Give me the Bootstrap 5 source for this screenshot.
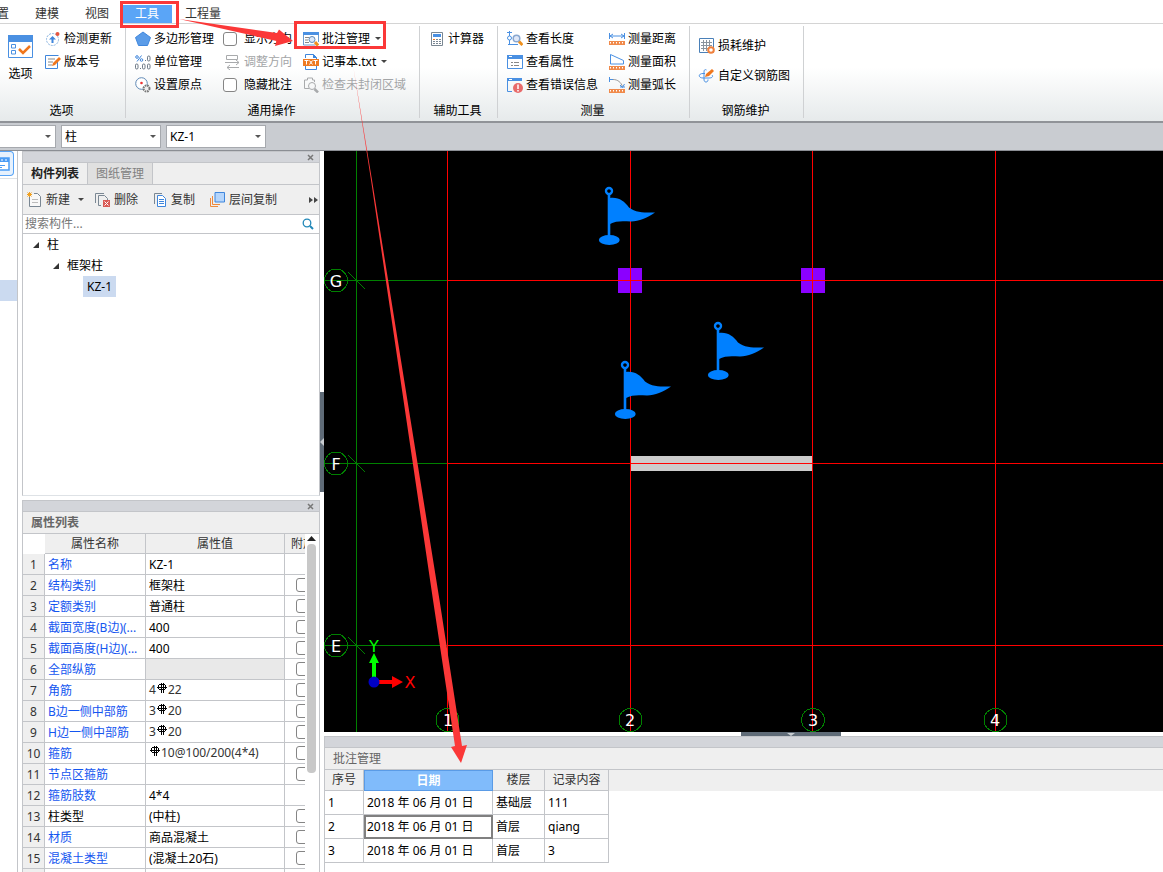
<!DOCTYPE html>
<html lang="zh-CN">
<head>
<meta charset="utf-8">
<meta name="viewport" content="width=device-width, initial-scale=1">
<title>工具 - 批注管理</title>
<link href="https://cdn.jsdelivr.net/npm/bootstrap@5.3.0/dist/css/bootstrap.min.css" rel="stylesheet">
<style>
  :root { --line: #c3c5c9; --bar: #d3d5da; --pane: #efefef; --blue: #4a90e2; }
  body { font: 12px/18px "Noto Sans", "Noto Sans CJK SC", sans-serif; color: #000; background: #fff; overflow: hidden; }
  button { font: inherit; color: inherit; background: none; border: 0; padding: 0; }
  svg { flex: none; display: block; }
  .app { height: 100vh; position: relative; }
  .marks { position: absolute; inset: 0; width: 100%; height: 100%; pointer-events: none; z-index: 5; }

  /* menu tabs */
  .menu-tabs { height: 24px; padding-top: 5px; border-bottom: 1px solid #d4d4d4; }
  .menu-tabs a { color: #333; text-decoration: none; width: 50px; text-align: center; height: 18px; }
  .menu-tabs a.edge { width: 9px; display: flex; justify-content: flex-end; overflow: hidden; margin-right: 13px; }
  .menu-tabs a.on { background: #5aa5f7; color: #fff; }
  .menu-tabs a:last-child { margin-left: 6px; }

  /* ribbon */
  .ribbon { height: 99px; background: linear-gradient(#fff 45%, #e6eaeb); border-bottom: 2px solid #909398; }
  .rb-group { position: relative; display: flex; flex-direction: column; justify-content: space-between; border-right: 1px solid #cfd1d3; margin: 2px 0 3px; padding-top: 1px; }
  .rb-group .title { text-align: center; height: 16px; line-height: 18px; padding-right: 2px; }
  .tool { display: flex; align-items: center; gap: 3px; height: 23px; white-space: nowrap; }
  .tool:disabled { color: #a3a5a7; }
  .tick { gap: 7px; }
  .tick input, .props input { appearance: none; width: 14px; height: 14px; margin: 0; border: 1px solid #858585; border-radius: 3px; background: #fff; flex: none; }
  .caret { border: 3px solid transparent; border-top-color: #444; border-bottom: 0; margin-left: 2px; }
  .upkeep { padding: 7px 0 0 8px; }
  .upkeep .tool + .tool { margin-top: 7px; }

  /* selector bar */
  .picker-bar { height: 28px; background: #c9ccd1; border-bottom: 1px solid #8b8e94; gap: 5px; }
  .picker-bar select { appearance: none; width: 100px; height: 23px; border: 1px solid #a6a9ae; border-radius: 0; padding: 0 3px; line-height: 18px; color: #000; background: #fff; }
  .picker { position: relative; }
  .picker::after { content: ""; position: absolute; right: 5px; top: 10px; border: 3px solid transparent; border-top-color: #555; border-bottom: 0; pointer-events: none; }
  .picker-bar .cut select { width: 56px; border-left: 0; }

  /* left side */
  .rail { width: 18px; border-right: 1px solid var(--line); }
  .rail button { width: 14px; height: 25px; border: 1px solid #57a3f5; border-left: 0; border-radius: 0 4px 4px 0; background: #e6f1fd; }
  .rail .row-on { height: 21px; background: #cbdaf0; }
  .side { width: 298px; margin-left: 4px; gap: 4px; }
  .panel { border: 1px solid var(--line); border-bottom: 0; min-height: 0; }
  .grip { height: 11px; background: var(--bar); border-bottom: 1px solid var(--line); display: flex; justify-content: flex-end; align-items: center; padding-right: 5px; }
  .side-tabs { background: var(--pane); height: 22px; border-bottom: 1px solid var(--line); }
  .side-tabs button { width: 65px; border-right: 1px solid var(--line); color: #808080; background: #e0e0e0; }
  .side-tabs button.on { background: var(--pane); color: #222; font-weight: 600; }
  .side-tools { background: var(--pane); height: 30px; border-bottom: 1px solid var(--line); padding: 0 1px 0 4px; color: #333; }
  .side-tools .tool { gap: 4px; }
  .find { height: 19px; border-bottom: 1px solid var(--line); padding: 0 5px 0 2px; }
  .find input { border: 0; outline: 0; flex: 1; padding: 0; height: 18px; min-width: 0; }
  .find input::placeholder { color: #777; opacity: 1; }
  .tree { list-style: none; margin: 0; padding: 0; }
  .tree li > div { height: 21px; display: flex; align-items: center; gap: 8px; }
  .tree .leaf { background: #cbdaf0; padding: 0 4px; line-height: 21px; }
  .ptitle { height: 22px; line-height: 21px; padding-left: 8px; background: var(--pane); border-bottom: 1px solid var(--line); color: #666; }

  .sheet { border-collapse: separate; border-spacing: 0; table-layout: fixed; }
  .sheet th, .sheet td { padding: 0 3px; font-weight: 400; white-space: nowrap; overflow: hidden; border-right: 1px solid var(--line); border-bottom: 1px solid var(--line); }
  .sheet thead th { background: var(--pane); color: #333; text-align: center; }
  .props { width: 298px; }
  .props tr { height: 21px; }
  .props thead tr { height: 20px; }
  .props th, .props td { line-height: 19px; }
  .props tbody th { background: var(--pane); color: #333; text-align: center; padding: 0; }
  .props td:nth-child(2) { color: #1456f0; text-overflow: ellipsis; }
  .props td.plain:nth-child(2) { color: #000; }
  .props td:nth-child(4), .props thead th:nth-child(4) { text-align: left; border-right: 0; }
  .props td:nth-child(4) { padding-left: 11px; }
  .props thead th:nth-child(4) { padding-left: 6px; }
  .props input { display: block; }
  .props .bar { color: #333; line-height: 17px; padding-bottom: 2px; }
  .props .bar svg { display: inline-block; vertical-align: 1px; margin: 0 1px; }
  .clip { flex: 1; overflow: hidden; min-width: 0; }
  .vscroll { width: 14px; padding: 2px 3px 0 2px; }
  .vscroll i { display: block; width: 9px; height: 229px; border-radius: 4px; background: #c8c8c8; margin-top: 3px; }

  /* drawing side */
  .split { width: 4px; background: #fff; }
  .split i, .hsplit i { background: #5f6b77; display: flex; align-items: center; justify-content: center; }
  .split i { height: 100px; margin-top: 241px; }
  .hsplit { height: 4px; padding-left: 94px; }
  .hsplit i { width: 100px; height: 4px; }
  .view { flex: 1 1 0; background: #000; min-height: 0; }
  .view text { font-family: "DejaVu Sans", sans-serif; font-size: 16px; fill: #fff; text-anchor: middle; }
  .notes { height: 136px; border: solid var(--line); border-width: 1px 0 0 1px; }
  .notes .heads { background: linear-gradient(var(--pane) 21px, #fff 21px); }
  .log { width: 284px; }
  .log tr { height: 24px; }
  .log thead tr { height: 21px; }
  .log thead th:nth-child(2) { background: #80bbfb; border: 1px solid #5a9be6; color: #fff; font-weight: 600; }
  .log td.cur { border: 0; box-shadow: inset 0 0 0 2px #808080; }
</style>
</head>
<body>
<svg width="0" height="0" class="position-absolute" aria-hidden="true">
  <defs>
    <g id="flag" fill="#0080ff">
      <circle r="3" fill="#000" stroke="#0080ff" stroke-width="2.4"/>
      <path d="M-1.300 3.500h2.600v43h-2.600z"/>
      <path d="M1 7C10 6 15 10 20 16.500C27 22 36 21.500 46 21.500C38 27 30 30.500 22 30.500C14 30 7 29.500 1 33z"/>
      <ellipse cx="0.300" cy="49" rx="10.400" ry="5"/>
    </g>
    <symbol id="rebar" viewBox="0 0 10 10"><path d="M2 1.500h6M1.500 2v4M8.500 2v4M2 6.500h6M0 4.500h10M4 0v10M6 0v10" fill="none" stroke="#000" shape-rendering="crispEdges"/></symbol>
    <symbol id="ruler" viewBox="0 0 16 4"><path d="M0 0h16v4H0z" fill="#f08a4b"/><path d="M1.500 1v1.500M4.500 1v1.500M7.500 1v1.500M10.500 1v1.500M13.500 1v1.500" stroke="#fff"/></symbol>
    <symbol id="x" viewBox="0 0 7 7"><path d="M1 1l5 5M6 1l-5 5" stroke="#777" stroke-width="1.500"/></symbol>
  </defs>
</svg>

<div class="app d-flex flex-column">
  <nav class="menu-tabs d-flex flex-shrink-0">
    <a class="edge" href="#">置</a><a href="#">建模</a><a href="#">视图</a><a class="on" href="#">工具</a><a href="#">工程量</a>
  </nav>

  <div class="ribbon d-flex flex-shrink-0">
    <section class="rb-group" style="width:126px">
      <div class="d-flex">
        <button class="d-flex flex-column align-items-center ms-2 pt-2">
          <svg width="25" height="23"><path d="M.5.500h24v22H.5z" fill="#fff" stroke="#4a90e2"/><path d="M0 0h25v7H0z" fill="#4a90e2"/><path d="M3.500 9.500h4v3.500h-4zM3.500 15.500h4V19h-4z" fill="none" stroke="#4a90e2"/><path d="M11 14l4 4 7-7" fill="none" stroke="#f0761c" stroke-width="2.500"/></svg>
          <span style="padding-top:7px">选项</span>
        </button>
        <div style="margin-left:12px">
          <button class="tool"><svg width="16" height="16"><circle cx="7.500" cy="8.500" r="6" fill="#fff" stroke="#8ab4e0" stroke-dasharray="2 1"/><path d="M7.500 5l3.500 3.500h-2.500V12h-2V8.500H4z" fill="#3f86dc"/><circle cx="12.500" cy="3" r="2" fill="#e5553f"/></svg>检测更新</button>
          <button class="tool"><svg width="16" height="16"><path d="M12.500 8v6.500h-12v-13h13" fill="none" stroke="#3f86dc"/><path d="M3 5h7M3 8h5M3 11h4" stroke="#888"/><path d="M7 12l1-3 6-6 2 2-6 6z" fill="#f0761c"/></svg>版本号</button>
        </div>
      </div>
      <div class="title">选项</div>
    </section>

    <section class="rb-group" style="width:294px">
      <div class="d-flex">
        <div style="width:88px;margin-left:9px">
          <button class="tool"><svg width="16" height="16"><path d="M8 1l7.500 5.500-3 8h-9l-3-8z" fill="#5b9ce8" stroke="#3f86dc"/></svg>多边形管理</button>
          <button class="tool"><svg width="16" height="16" fill="none" stroke="#6a7784"><circle cx="2" cy="3" r="1.300" stroke="#3f86dc"/><circle cx="6.500" cy="6" r="1.300" stroke="#3f86dc"/><path d="M6.500 1.500l-4.500 6" stroke="#3f86dc"/><path d="M10 6.500h1"/><rect x="12.500" y="2" width="2.500" height="5" rx="1.200"/><rect x=".5" y="10" width="2.500" height="5" rx="1.200"/><path d="M5 14.500h1"/><rect x="7.500" y="10" width="2.500" height="5" rx="1.200"/><rect x="12.500" y="10" width="2.500" height="5" rx="1.200"/></svg>单位管理</button>
          <button class="tool"><svg width="16" height="16"><circle cx="6.500" cy="6.500" r="5.800" fill="#fff" stroke="#5f88b5"/><circle cx="6.500" cy="6" r="1.300" fill="#e33"/><circle cx="11.500" cy="11.500" r="3" fill="#eee" stroke="#777" stroke-width="2" stroke-dasharray="1.600 .8"/></svg>设置原点</button>
        </div>
        <div style="width:80px">
          <label class="tool tick"><input type="checkbox">显示方向</label>
          <button class="tool" disabled><svg width="18" height="16" fill="none" stroke="#a8aaac"><path d="M3.500 1.500h11v4h-11zM2 8.500h14M13 6l3 2.500-3 2.500M16 13.500H4M7 11l-3 2.500L7 16"/></svg>调整方向</button>
          <label class="tool tick"><input type="checkbox">隐藏批注</label>
        </div>
        <div>
          <button class="tool"><svg width="16" height="16"><path d="M.5 1v13h12M15.500 2v9" fill="none" stroke="#6b9bd0"/><path d="M0 1h16v3H0z" fill="#4a90e2"/><path d="M2 6.500h4M2 9h3M2 11.500h4" stroke="#888"/><circle cx="9" cy="8.500" r="3" fill="#dce9fa" stroke="#5f88b5"/><path d="M12 11l3 3.500" stroke="#f0901c" stroke-width="3"/></svg>批注管理<i class="caret"></i></button>
          <button class="tool"><svg width="16" height="16"><path d="M2.500 4V.5h8l3 3V15.500h-11V12" fill="#fff" stroke="#3f86dc"/><path d="M10 0v4h4" fill="#3f86dc"/><path d="M0 5h16v7H0z" fill="#ee7a22"/><path d="M1.500 6.500h4M3.500 6.500v4M6.500 6.500l3 4M9.500 6.500l-3 4M10.500 6.500h4M12.500 6.500v4" stroke="#fff"/></svg>记事本.txt<i class="caret"></i></button>
          <button class="tool" disabled><svg width="16" height="16" fill="none" stroke="#a8aaac"><path d="M6 11.500H1.500V3h3V1h5v2h2v2"/><circle cx="9" cy="9" r="3.500"/><path d="M11.500 12l3.500 3.500" stroke-width="2.500"/></svg>检查未封闭区域</button>
        </div>
      </div>
      <div class="title">通用操作</div>
    </section>

    <section class="rb-group" style="width:78px">
      <div style="padding-left:10px"><button class="tool"><svg width="15" height="16"><path d="M1.500 1.500h11v13h-11z" fill="#fff" stroke="#7a8793"/><path d="M3 3h8v3H3z" fill="#4a90e2"/><path d="M3 8.500h8M3 10.500h8M3 12.500h8" stroke="#7a8793" stroke-dasharray="2 1"/><path d="M3 8.500h2" stroke="#f0761c"/></svg>计算器</button></div>
      <div class="title">辅助工具</div>
    </section>

    <section class="rb-group" style="width:192px">
      <div class="d-flex">
        <div style="width:102px;margin-left:9px">
          <button class="tool"><svg width="16" height="16" fill="none" stroke="#4a90e2"><path d="M2.500 0v5M2.500 9v4M0 1.500h5M1 13.500h10"/><circle cx="2.500" cy="7" r="2"/><circle cx="9.500" cy="7.500" r="3.300" fill="#dfe7f7" stroke="#8aa8d0" stroke-width="1.500"/><path d="M12 10.500l3.500 3.500" stroke="#f0901c" stroke-width="3"/></svg>查看长度</button>
          <button class="tool"><svg width="16" height="16"><path d="M.5 1.500h15v13H.5z" fill="#fff" stroke="#4a90e2"/><path d="M0 1h16v4H0z" fill="#4a90e2"/><path d="M4 8.500h2M7 8.500h5M4 11.500h2M7 11.500h5" stroke="#888"/><path d="M2 2.500h3" stroke="#fff"/></svg>查看属性</button>
          <button class="tool"><svg width="16" height="16"><path d="M.5 1v13.500H5" fill="none" stroke="#4a90e2"/><path d="M0 1h15v3H0z" fill="#4a90e2"/><path d="M2 2.500h3" stroke="#fff"/><circle cx="11" cy="11" r="5" fill="#e86a6a"/><path d="M11 7.500v4.500M11 13v1.500" stroke="#fff" stroke-width="1.500"/></svg>查看错误信息</button>
        </div>
        <div>
          <button class="tool"><svg width="16" height="16"><path d="M.5 2v6M15.500 2v6M1 5h14M4 3l-3 2 3 2M12 3l3 2-3 2" fill="none" stroke="#4a90e2"/><use href="#ruler" y="10" width="16" height="4"/></svg>测量距离</button>
          <button class="tool"><svg width="16" height="16"><path d="M1.500.5v9.500h13V6.500z" fill="none" stroke="#4a90e2"/><use href="#ruler" y="12" width="16" height="4"/></svg>测量面积</button>
          <button class="tool"><svg width="16" height="16"><path d="M.5 0v5M0 2.500h4M11 10h5" fill="none" stroke="#4a90e2"/><path d="M4 2.500c5 0 8 3 9.500 7" fill="none" stroke="#999"/><path d="M11 8l2.500 2.500L15.500 7" fill="none" stroke="#4a90e2"/><use href="#ruler" y="12" width="16" height="4"/></svg>测量弧长</button>
        </div>
      </div>
      <div class="title">测量</div>
    </section>

    <section class="rb-group" style="width:114px">
      <div class="upkeep">
        <button class="tool"><svg width="17" height="16"><path d="M1.500.500h14v14h-14z" fill="#fff" stroke="#4a80b8"/><path d="M3 4.500h11M3 7.500h11M3 10.500h8M5.500 2v11M8.500 2v11M11.500 2v8" stroke="#8a949e"/><circle cx="13" cy="12" r="2.800" fill="#fff" stroke="#f0803c" stroke-width="2"/></svg>损耗维护</button>
        <button class="tool"><svg width="17" height="16" fill="none" stroke="#4a90e2"><path d="M8.500 2c-2-1-2.500 0-2.500 3v6c0 2 .5 3 2 3s2-1 2-2.500M7 5.500H5c-5 0-5 4.500 0 4.500h6c4 0 4-2 3-3"/><path d="M7 9l1-3 6-5 2 2-5 5z" fill="#f0761c" stroke="none"/></svg>自定义钢筋图</button>
      </div>
      <div class="title">钢筋维护</div>
    </section>
  </div>

  <div class="picker-bar d-flex align-items-center flex-shrink-0">
    <div class="picker cut"><select aria-label="楼层"><option></option></select></div>
    <div class="picker"><select aria-label="构件类型"><option>柱</option></select></div>
    <div class="picker"><select aria-label="构件"><option>KZ-1</option></select></div>
  </div>

  <main class="d-flex flex-grow-1" style="min-height:0">
    <div class="rail">
      <button aria-label="导航" class="d-block"><svg width="10" height="14"><path d="M0 1h9v12H0" fill="#fff" stroke="#4a9cf5" stroke-width="1.500"/><path d="M0 1h9v4H0z" fill="#4a9cf5"/><path d="M0 8.500h5M0 10.500h2" stroke="#4a9cf5"/><path d="M1 3h2M5 3h2" stroke="#fff"/></svg></button>
      <div style="height:102px;margin-top:2px" class="border-top"></div>
      <div class="row-on"></div>
    </div>

    <aside class="side d-flex flex-column">
      <section class="panel border-bottom flex-shrink-0" style="height:345px">
        <div class="grip"><button aria-label="关闭"><svg width="7" height="7"><use href="#x"/></svg></button></div>
        <div class="side-tabs d-flex"><button class="on">构件列表</button><button>图纸管理</button></div>
        <div class="side-tools d-flex align-items-center">
          <button class="tool"><svg width="15" height="16"><path d="M2.500 5v9.500h11v-10l-3-3H7" fill="#f8f8f8" stroke="#7a8793"/><path d="M5 7.500h6M5 10.500h6" stroke="#bbb"/><path d="M2.500 0v5M0 2.500h5M.5.500l4 4M4.500.500l-4 4" stroke="#f0a020"/></svg>新建<i class="caret ms-1"></i></button>
          <button class="tool" style="margin-left:11px"><svg width="15" height="16"><path d="M.5 11V1.500H9M6 13.500H3.500v-10h6l3 3V8" fill="none" stroke="#7a8793"/><path d="M8 8h7v7H8z" fill="#d95a55"/><path d="M9.500 9.500l4 4M13.500 9.500l-4 4" stroke="#fff"/></svg>删除</button>
          <button class="tool" style="margin-left:15px"><svg width="14" height="16"><path d="M1.500 12V1.500H9" fill="none" stroke="#7a8793"/><path d="M4.500 3.500h5l3 3v8h-8z" fill="#fff" stroke="#3f86dc"/><path d="M6 7.500h5M6 9.500h5M6 11.500h5" stroke="#3f86dc"/></svg>复制</button>
          <button class="tool" style="margin-left:15px"><svg width="15" height="16"><path d="M.5 6v8.500H8M2.500 4v8.500H10" fill="none" stroke="#ee8a3c"/><path d="M5 .5h9.500V10H5z" fill="#b5d5fb" stroke="#3f86dc"/></svg>层间复制</button>
          <svg class="ms-auto" width="9" height="6"><path d="M0 0l4 3-4 3zM5 0l4 3-4 3z" fill="#444"/></svg>
        </div>
        <div class="find d-flex align-items-center"><input type="text" aria-label="搜索构件" placeholder="搜索构件..."><svg width="12" height="12" fill="none" stroke="#2288b8"><circle cx="5" cy="5" r="3.800" stroke-width="1.300"/><path d="M8 8l3 3" stroke-width="2"/></svg></div>
        <ul class="tree">
          <li><div style="padding-left:10px"><svg width="6" height="6"><path d="M6 0v6H0z" fill="#333"/></svg>柱</div></li>
          <li><div style="padding-left:30px"><svg width="6" height="6"><path d="M6 0v6H0z" fill="#333"/></svg>框架柱</div></li>
          <li><div style="padding-left:60px"><span class="leaf">KZ-1</span></div></li>
        </ul>
      </section>

      <section class="panel flex-grow-1 overflow-hidden">
        <div class="grip"><button aria-label="关闭"><svg width="7" height="7"><use href="#x"/></svg></button></div>
        <div class="ptitle fw-semibold">属性列表</div>
        <div class="d-flex">
          <div class="clip">
            <table class="sheet props">
              <colgroup><col style="width:22px"><col style="width:101px"><col style="width:139px"><col></colgroup>
              <thead><tr><th style="background:#fff;border-color:#fff"></th><th>属性名称</th><th>属性值</th><th>附加</th></tr></thead>
              <tbody>
                <tr><th>1</th><td>名称</td><td>KZ-1</td><td></td></tr>
                <tr><th>2</th><td>结构类别</td><td>框架柱</td><td><input type="checkbox" aria-label="附加 2"></td></tr>
                <tr><th>3</th><td>定额类别</td><td>普通柱</td><td><input type="checkbox" aria-label="附加 3"></td></tr>
                <tr><th>4</th><td>截面宽度(B边)(...</td><td>400</td><td><input type="checkbox" aria-label="附加 4"></td></tr>
                <tr><th>5</th><td>截面高度(H边)(...</td><td>400</td><td><input type="checkbox" aria-label="附加 5"></td></tr>
                <tr><th>6</th><td>全部纵筋</td><td style="background:#e9e9e9"></td><td><input type="checkbox" aria-label="附加 6"></td></tr>
                <tr><th>7</th><td>角筋</td><td class="bar">4<svg width="10" height="10"><use href="#rebar"/></svg>22</td><td><input type="checkbox" aria-label="附加 7"></td></tr>
                <tr><th>8</th><td>B边一侧中部筋</td><td class="bar">3<svg width="10" height="10"><use href="#rebar"/></svg>20</td><td><input type="checkbox" aria-label="附加 8"></td></tr>
                <tr><th>9</th><td>H边一侧中部筋</td><td class="bar">3<svg width="10" height="10"><use href="#rebar"/></svg>20</td><td><input type="checkbox" aria-label="附加 9"></td></tr>
                <tr><th>10</th><td>箍筋</td><td class="bar"><svg width="10" height="10"><use href="#rebar"/></svg>10@100/200(4*4)</td><td><input type="checkbox" aria-label="附加 10"></td></tr>
                <tr><th>11</th><td>节点区箍筋</td><td></td><td><input type="checkbox" aria-label="附加 11"></td></tr>
                <tr><th>12</th><td>箍筋肢数</td><td>4*4</td><td></td></tr>
                <tr><th>13</th><td class="plain">柱类型</td><td>(中柱)</td><td><input type="checkbox" aria-label="附加 13"></td></tr>
                <tr><th>14</th><td>材质</td><td>商品混凝土</td><td><input type="checkbox" aria-label="附加 14"></td></tr>
                <tr><th>15</th><td>混凝土类型</td><td>(混凝土20石)</td><td><input type="checkbox" aria-label="附加 15"></td></tr>
                <tr><th></th><td></td><td></td><td></td></tr>
              </tbody>
            </table>
          </div>
          <div class="vscroll"><svg width="9" height="5"><path d="M0 5l4.500-5L9 5z" fill="#222"/></svg><i></i></div>
        </div>
      </section>
    </aside>

    <div class="split"><i><svg width="4" height="8"><path d="M4 0v8L0 4z" fill="#c8ccd0"/></svg></i></div>

    <div class="d-flex flex-column flex-grow-1" style="min-width:0">
      <div class="view">
        <svg width="100%" height="100%" role="img" aria-label="轴网平面图">
          <g fill="#8b00ff"><path d="M294 117h24v25h-24zM477 117h24v25h-24z"/></g>
          <path d="M307 305h181v15H307z" fill="#ccc"/>
          <g stroke="#f00" shape-rendering="crispEdges">
            <line x1="123" y1="129.500" x2="100%" y2="129.500"/><line x1="123" y1="312.500" x2="100%" y2="312.500"/><line x1="123" y1="494.500" x2="100%" y2="494.500"/>
            <line x1="123.500" y1="0" x2="123.500" y2="100%"/><line x1="306.500" y1="0" x2="306.500" y2="100%"/><line x1="488.500" y1="0" x2="488.500" y2="100%"/><line x1="671.500" y1="0" x2="671.500" y2="100%"/>
          </g>
          <g stroke="#008000" fill="none" shape-rendering="crispEdges">
            <line x1="32.500" y1="0" x2="32.500" y2="100%"/>
            <path d="M0 129.500h123M0 312.500h123M0 494.500h123M24 121l17 17M24 304l17 17M24 486l17 17"/>
            <circle cx="12" cy="129.500" r="11.500"/><circle cx="12" cy="312.500" r="11.500"/><circle cx="12" cy="494.500" r="11.500"/>
            <circle cx="123.500" cy="569" r="11.500"/><circle cx="306.500" cy="569" r="11.500"/><circle cx="489" cy="569" r="11.500"/><circle cx="671.500" cy="569" r="11.500"/>
          </g>
          <text x="12" y="136">G</text><text x="12" y="319">F</text><text x="12" y="501">E</text>
          <text x="124" y="575">1</text><text x="306" y="575">2</text><text x="489" y="575">3</text><text x="671" y="575">4</text>
          <use href="#flag" x="285" y="40"/><use href="#flag" x="301" y="214"/><use href="#flag" x="394" y="175"/>
          <path d="M48 531V512h-3l5-10 5 10h-3v19z" fill="#0f0"/>
          <path d="M50 529h18v-4l11 6-11 6v-4H50z" fill="#f00"/>
          <circle cx="50" cy="531" r="5.500" fill="#0000c4"/>
          <text x="50" y="501" style="fill:#0f0">Y</text><text x="86" y="537" style="fill:#f00">X</text>
        </svg>
      </div>
      <div class="hsplit d-flex justify-content-center"><i><svg width="8" height="3"><path d="M0 0h8L4 3z" fill="#c8ccd0"/></svg></i></div>
      <section class="notes flex-shrink-0">
        <div class="grip"></div>
        <div class="ptitle">批注管理</div>
        <div class="heads">
          <table class="sheet log">
            <colgroup><col style="width:39px"><col style="width:129px"><col style="width:52px"><col></colgroup>
            <thead><tr><th>序号</th><th>日期</th><th>楼层</th><th>记录内容</th></tr></thead>
            <tbody>
              <tr><td>1</td><td>2018 年 06 月 01 日</td><td>基础层</td><td>111</td></tr>
              <tr><td>2</td><td class="cur">2018 年 06 月 01 日</td><td>首层</td><td>qiang</td></tr>
              <tr><td>3</td><td>2018 年 06 月 01 日</td><td>首层</td><td>3</td></tr>
            </tbody>
          </table>
        </div>
      </section>
    </div>
  </main>

  <!-- tutorial call-outs above the whole window -->
  <svg class="marks" aria-hidden="true">
    <g fill="none" stroke="#fb3838" stroke-width="3"><path d="M121.500 2.500h56v24h-56zM295.500 22.500h89v25h-89z"/></g>
    <g fill="#fb3838"><path d="M179 19L277 33l2-3.500L293 41l-18 5 1.500-5z"/><path d="M353.500 68L372 180 439.500 600l22.500 146 5-1-6 18-10-16 4-1L433 600 371 180z"/></g>
  </svg>
</div>
<script src="https://cdn.jsdelivr.net/npm/bootstrap@5.3.0/dist/js/bootstrap.bundle.min.js"></script>
</body>
</html>
